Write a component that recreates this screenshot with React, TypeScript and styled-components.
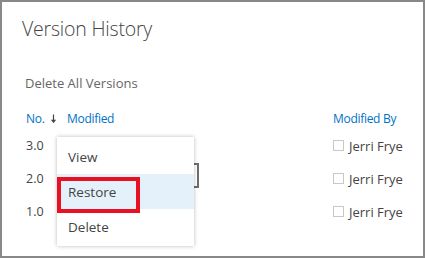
import React from "react";
import styled, { createGlobalStyle } from "styled-components";

const GlobalStyle = createGlobalStyle`
  html, body {
    margin: 0;
    padding: 0;
    background: #ffffff;
  }
  * {
    box-sizing: border-box;
  }
`;

const versions = [
  { no: "3.0", by: "Jerri Frye" },
  { no: "2.0", by: "Jerri Frye", open: true },
  { no: "1.0", by: "Jerri Frye" },
];

const menuItems = ["View", "Restore", "Delete"];

const App = () => {
  return (
    <>
      <GlobalStyle />
      <Panel>
        <Title>Version History</Title>
        <DeleteAll>Delete All Versions</DeleteAll>
        <Table>
          <HeaderRow>
            <HeadCell>
              No.
              <SortArrow width="7" height="10" viewBox="0 0 7 10">
                <path d="M3.5 0.5 V8.5" stroke="#444" strokeWidth="1.2" />
                <path d="M0.8 5.8 L3.5 9 L6.2 5.8 Z" fill="#444" />
              </SortArrow>
            </HeadCell>
            <HeadCell>Modified</HeadCell>
            <HeadCell>Modified By</HeadCell>
          </HeaderRow>
          {versions.map((v) => (
            <Row key={v.no}>
              <Cell>{v.no}</Cell>
              <Cell>{v.open && <Trigger />}</Cell>
              <ByCell>
                <Check />
                {v.by}
              </ByCell>
            </Row>
          ))}
        </Table>

        <Menu>
          {menuItems.map((item) => (
            <MenuItem key={item} $active={item === "Restore"}>
              {item}
            </MenuItem>
          ))}
        </Menu>
        <Callout />
      </Panel>
    </>
  );
};

export default App;

const Panel = styled.div`
  position: relative;
  width: 425px;
  height: 258px;
  border: 2px solid #888;
  padding: 13px 0 0 20px;
  font-family: "Open Sans", "Noto Sans", sans-serif;
  color: #444;
  overflow: hidden;
`;

const Title = styled.h1`
  margin: 0;
  font-size: 19.5px;
  font-weight: 300;
  line-height: 28px;
  letter-spacing: -0.2px;
  color: #444;
`;

const DeleteAll = styled.div`
  margin-top: 31px;
  padding-left: 3px;
  font-size: 13px;
  line-height: 18px;
  color: #666;
`;

const Table = styled.div`
  margin-top: 16px;
  padding-left: 4px;
`;

const HeaderRow = styled.div`
  display: grid;
  grid-template-columns: 41px 1fr 90px;
  height: 21px;
  align-items: center;
`;

const HeadCell = styled.div`
  display: flex;
  align-items: center;
  font-size: 12px;
  letter-spacing: -0.3px;
  color: #0072c6;
`;

const SortArrow = styled.svg`
  margin-left: 5px;
`;

const Row = styled.div`
  display: grid;
  grid-template-columns: 41px 1fr 90px;
  height: 33px;
  align-items: center;
`;

const Cell = styled.div`
  font-size: 12.5px;
  color: #444;
`;

const ByCell = styled(Cell)`
  display: flex;
  align-items: center;
  gap: 5px;
  font-size: 13px;
`;

const Check = styled.span`
  width: 11px;
  height: 11px;
  border: 1px solid #c8c8c8;
  background: #fff;
`;

const Trigger = styled.div`
  width: 132px;
  height: 25px;
  margin-bottom: 6px;
  border: 2px solid #6e6e6e;
  background: #fff;
`;

const Menu = styled.div`
  position: absolute;
  left: 55px;
  top: 135px;
  width: 137px;
  padding: 2px 0;
  background: #fff;
  box-shadow: 0 0 4px rgba(0, 0, 0, 0.28);
`;

const MenuItem = styled.div<{ $active?: boolean }>`
  height: 35px;
  display: flex;
  align-items: center;
  padding-left: 11px;
  font-size: 13.5px;
  color: #444;
  background: ${(p) => (p.$active ? "#e5f1fa" : "#fff")};
`;

const Callout = styled.div`
  position: absolute;
  left: 55px;
  top: 175px;
  width: 83px;
  height: 36px;
  border: 4px solid #e81123;
`;
